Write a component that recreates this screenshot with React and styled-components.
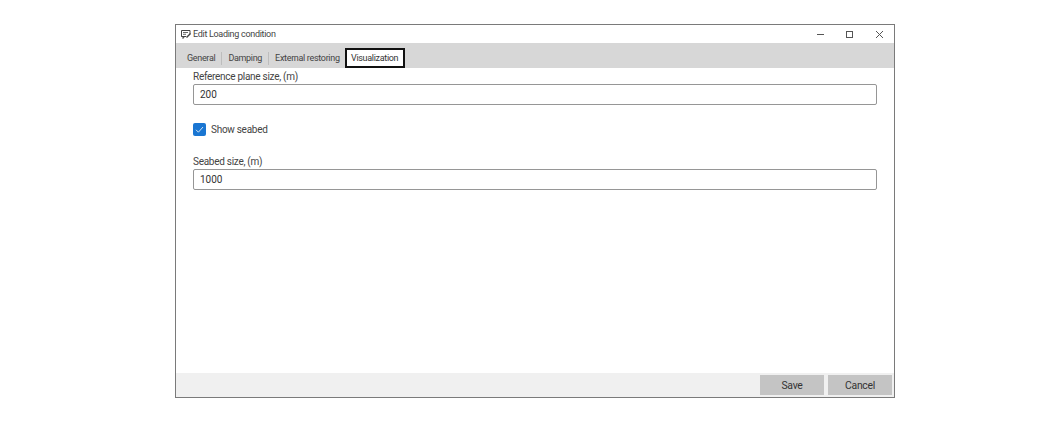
import React from 'react';
import styled, { createGlobalStyle } from 'styled-components';

const GlobalStyle = createGlobalStyle`
  html, body {
    margin: 0;
    padding: 0;
    background: #fff;
  }
  body {
    font-family: Roboto, "Noto Sans", sans-serif;
    color: #333;
  }
`;

const Page = styled.div`
  width: 1047px;
  height: 426px;
  box-sizing: border-box;
  padding: 24px 0 0 175px;
`;

const Window = styled.div`
  width: 720px;
  height: 374px;
  box-sizing: border-box;
  border: 1px solid #7a7a7a;
  display: flex;
  flex-direction: column;
  background: #fff;
`;

const TitleBar = styled.div`
  height: 18px;
  display: flex;
  align-items: center;
  padding-left: 5px;
  font-size: 9px;
  letter-spacing: -0.3px;
  color: #444;
`;

const TitleText = styled.span`
  margin-left: 1px;
  flex: 1;
`;

const WinButtons = styled.div`
  display: flex;
  align-items: center;
`;

const WinButton = styled.div`
  width: 29.5px;
  height: 18px;
  display: flex;
  align-items: center;
  justify-content: center;
`;

const TabBar = styled.div`
  height: 25px;
  background: #d7d7d7;
  display: flex;
  align-items: flex-end;
  padding-left: 5px;
`;

const Tab = styled.div`
  font-size: 9px;
  letter-spacing: -0.32px;
  color: #444;
  height: 13px;
  line-height: 13px;
  margin-bottom: 3px;
  padding: 0 6px;
  border-right: ${(p) => (p.$divider ? '1px solid #bdbdbd' : 'none')};
`;

const ActiveTab = styled.div`
  box-sizing: border-box;
  height: 20px;
  width: 60px;
  margin-left: -1px;
  border: 2px solid #111;
  background: #fff;
  font-size: 9px;
  letter-spacing: -0.32px;
  color: #333;
  display: flex;
  align-items: center;
  justify-content: center;
`;

const Content = styled.div`
  flex: 1;
  padding: 1.5px 17px 0 17px;
  display: flex;
  flex-direction: column;
`;

const Label = styled.div`
  font-size: 10px;
  letter-spacing: -0.28px;
  line-height: 14px;
  color: #444;
  margin-bottom: 0.5px;
`;

const Input = styled.div`
  box-sizing: border-box;
  height: 21px;
  border: 1px solid #969696;
  border-radius: 2px;
  padding-left: 6px;
  font-size: 10px;
  line-height: 19px;
  color: #333;
`;

const CheckRow = styled.div`
  display: flex;
  align-items: center;
  gap: 5px;
  margin: 16px 0 17.5px;
  height: 16px;
  font-size: 10px;
  letter-spacing: -0.28px;
  color: #444;
`;

const CheckBox = styled.div`
  width: 13px;
  height: 13px;
  border-radius: 2px;
  background: #1a76d2;
  display: flex;
  align-items: center;
  justify-content: center;
`;

const Footer = styled.div`
  height: 24px;
  background: #f0f0f0;
  display: flex;
  justify-content: flex-end;
  align-items: center;
  gap: 4px;
  padding: 0 2px 0 0;
`;

const FootButton = styled.div`
  width: 64px;
  height: 20px;
  background: #c4c4c4;
  font-size: 10.4px;
  letter-spacing: -0.3px;
  color: #333;
  display: flex;
  align-items: center;
  justify-content: center;
`;

const App = () => {
  return (
    <Page>
      <GlobalStyle />
      <Window>
        <TitleBar>
          <svg width="11" height="11" viewBox="0 0 11 11" fill="none" stroke="#444" strokeWidth="1">
            <path d="M0.5 1.5h8.5v3.5M5 7.5h-1.5l-1.5 2v-2h-1.5z" />
            <path d="M0.5 1.5v6" />
            <path d="M2 3.5h5M2 5.3h3" strokeWidth="0.8" />
            <path d="M5.5 8.5l4-4" strokeWidth="1.4" />
          </svg>
          <TitleText>Edit Loading condition</TitleText>
          <WinButtons>
            <WinButton>
              <svg width="9" height="9" viewBox="0 0 9 9" stroke="#555" fill="none">
                <path d="M1 4.5h7" />
              </svg>
            </WinButton>
            <WinButton>
              <svg width="9" height="9" viewBox="0 0 9 9" stroke="#555" fill="none">
                <rect x="1.5" y="1.5" width="6" height="6" />
              </svg>
            </WinButton>
            <WinButton>
              <svg width="9" height="9" viewBox="0 0 9 9" stroke="#555" fill="none">
                <path d="M1 1l7 7M8 1l-7 7" />
              </svg>
            </WinButton>
          </WinButtons>
        </TitleBar>
        <TabBar>
          <Tab $divider>General</Tab>
          <Tab $divider>Damping</Tab>
          <Tab>External restoring</Tab>
          <ActiveTab>Visualization</ActiveTab>
        </TabBar>
        <Content>
          <Label>Reference plane size, (m)</Label>
          <Input>200</Input>
          <CheckRow>
            <CheckBox>
              <svg width="9" height="9" viewBox="0 0 9 9" fill="none" stroke="#fff" strokeWidth="0.8">
                <path d="M1 4.8l2.4 2.4L8 2" />
              </svg>
            </CheckBox>
            Show seabed
          </CheckRow>
          <Label>Seabed size, (m)</Label>
          <Input>1000</Input>
        </Content>
        <Footer>
          <FootButton>Save</FootButton>
          <FootButton>Cancel</FootButton>
        </Footer>
      </Window>
    </Page>
  );
};

export default App;
